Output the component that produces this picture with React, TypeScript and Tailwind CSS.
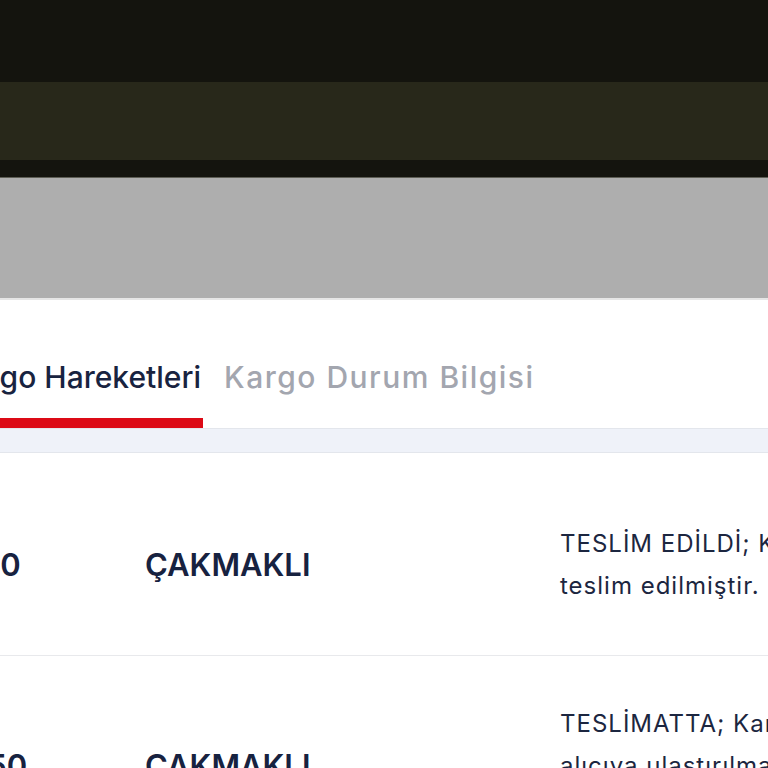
import React from 'react';

interface Movement {
  time: string;
  place: string;
  lines: string[];
  pad: string;
}

const movements: Movement[] = [
  {
    time: '14:30',
    place: 'ÇAKMAKLI',
    lines: ['TESLİM EDİLDİ; Kargonuz alıcıya', 'teslim edilmiştir.'],
    pad: 'pt-[70px] pb-[48px]',
  },
  {
    time: '09:50',
    place: 'ÇAKMAKLI',
    lines: ['TESLİMATTA; Kargonuz kurye ile', 'alıcıya ulaştırılmak üzere', 'dağıtıma çıkarılmıştır.'],
    pad: 'pt-[47px] pb-[45px]',
  },
];

const App: React.FC = () => {
  return (
    <div
      className="w-full min-h-screen overflow-hidden bg-white"
      style={{ fontFamily: 'Inter, "Open Sans", sans-serif' }}
    >
      {/* Dark header */}
      <div className="h-[82px] bg-[#14140e]" />
      <div className="h-[78px] bg-[#28281a]" />
      <div className="h-[17px] bg-[#14140e]" />
      <div className="h-px bg-[#5e5e55]" />
      {/* Dimmed area */}
      <div className="h-[120px] bg-[#aeaeae]" />
      <div className="h-[2px] bg-[#e6e6e6]" />

      {/* Tabs */}
      <div className="pt-[55px] flex items-end gap-[21px] -ml-[70px] whitespace-nowrap">
        <div className="w-[273px] text-right pr-[2px] text-[30px] leading-[45px] font-medium text-[#182340] pb-[18px] border-b-[10px] border-[#dc0a16]">
          Kargo Hareketleri
        </div>
        <div className="text-[30px] leading-[45px] font-medium tracking-[1.5px] text-[#a3a6af] pb-[28px]">
          Kargo Durum Bilgisi
        </div>
      </div>
      <div className="h-[25px] bg-[#eff2f9] border-t border-b border-[#e3e6ec]" />

      {/* Rows */}
      {movements.map((m, idx) => (
        <div
          key={idx}
          className={`grid grid-cols-[208px_415px_1fr] items-center -ml-[63px] whitespace-nowrap border-b border-[#e8e9ec] ${m.pad}`}
        >
          <div className="text-right pr-[132px] text-[31px] font-semibold text-[#172240]">
            {m.time}
          </div>
          <div className="text-[31px] font-semibold text-[#172240]">{m.place}</div>
          <div className="text-[24px] leading-[42px] tracking-[1px] text-[#1c2640]">
            {m.lines.map((l, i) => (
              <div key={i}>{l}</div>
            ))}
          </div>
        </div>
      ))}
    </div>
  );
};

export default App;
